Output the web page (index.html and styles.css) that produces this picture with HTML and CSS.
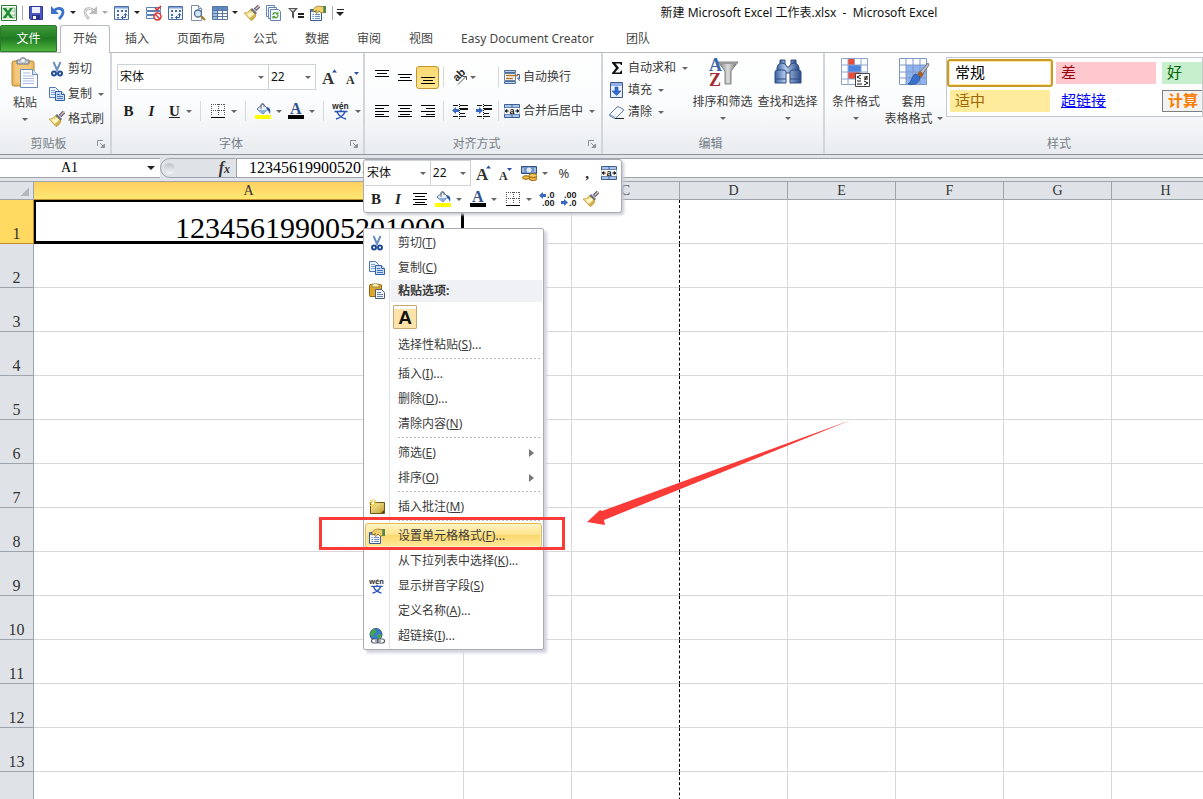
FILE: index.html
```html
<!DOCTYPE html>
<html lang="zh-CN">
<head>
<meta charset="utf-8">
<title>新建 Microsoft Excel 工作表.xlsx - Microsoft Excel</title>
<link rel="stylesheet" href="styles.css">
</head>
<body>
<svg class="sprite" aria-hidden="true">
  <defs>
    <linearGradient id="gTube" x1="0" y1="0" x2="1" y2="0"><stop offset="0" stop-color="#3b62a2"/><stop offset=".4" stop-color="#b9cdec"/><stop offset="1" stop-color="#274a86"/></linearGradient>
    <linearGradient id="gGold" x1="0" y1="0" x2="1" y2="1"><stop offset="0" stop-color="#fff3a8"/><stop offset="1" stop-color="#c09a2c"/></linearGradient>
    <linearGradient id="gGrey" x1="0" y1="0" x2="1" y2="0"><stop offset="0" stop-color="#777"/><stop offset=".5" stop-color="#ddd"/><stop offset="1" stop-color="#666"/></linearGradient>
  </defs>
  <symbol id="excel" viewBox="0 0 16 16"><path d="M.500.500h15v15H.500z" fill="#fff" stroke="#2c7a35"/><path d="M11 3h3v10h-3M11 6h3M11 10h3" fill="#fff" stroke="#7ab87d"/><path d="M1 2h10v12H1z" fill="#d5edcf"/><path d="M1.500 3h3.500L7 6l2-3h3L8.500 8l4 5H9L7 10l-2 3H1.500L5.500 8z" fill="#1d8a34"/></symbol>
  <symbol id="save" viewBox="0 0 16 16"><path d="M1.500 1.500h13v13h-12l-1-1z" fill="#4c57c6" stroke="#2f3796"/><path d="M4 2h8v6H4z" fill="#eef1fb"/><path d="M4 10h8v4H4z" fill="#2c3480"/><path d="M5 11h3v3H5z" fill="#fff"/></symbol>
  <symbol id="undo" viewBox="0 0 16 16"><path d="M1 1v8h8z" fill="#3b72cc"/><path d="M4 6c3-4 9-3 9 1 0 3-2 5-4 7" fill="none" stroke="#3b72cc" stroke-width="2.800"/></symbol>
  <symbol id="redo" viewBox="0 0 16 16"><path d="M15 1v8H7z" fill="#bbb"/><path d="M12 6C9 2 3 3 3 7c0 3 2 5 4 7" fill="none" stroke="#b5b5b5" stroke-width="2.600"/><path d="M12 6C9 2 3 3 3 7c0 3 2 5 4 7" fill="none" stroke="#eee"/></symbol>
  <symbol id="pivot" viewBox="0 0 16 16"><path d="M.500 1.500h14v13H.500z" fill="#f4f8fe" stroke="#4a6ea5"/><path d="M1 2h13v1.500H1z" fill="#7fa3d8"/><path d="M3 5h2v2H3zM7 5h2v2H7zM11 5h2v2h-2zM3 9h2v2H3zM3 12h2v1.500H3z" fill="#4a6ea5"/><path d="M7.500 12.500h4V9M10 10.500l1.500-2 1.500 2M9 11l-1.500 1.500L9 14" fill="none" stroke="#345a95"/></symbol>
  <symbol id="formno" viewBox="0 0 16 16"><path d="M.500 2.500h14v3h-14zM.500 6.500h14v3h-14zM.500 10.500h14v3h-14z" fill="#fff" stroke="#5c7fb5"/><path d="m9 3 2 2 4-4" stroke="#d22" stroke-width="1.500" fill="none"/><circle cx="11.500" cy="11.500" r="3.500" fill="#fff" stroke="#d33" stroke-width="1.500"/><path d="m9 9 5 5" stroke="#d33" stroke-width="1.500"/></symbol>
  <symbol id="preview" viewBox="0 0 16 16"><path d="M1.500.500h7l3 3v12h-10z" fill="#fff" stroke="#7d8ea8"/><path d="M8.500.500v3h3" fill="#dce6f4" stroke="#7d8ea8"/><circle cx="8" cy="8.500" r="3.500" fill="#cfe5f8" stroke="#4c6d93" stroke-width="1.300"/><path d="m11 11 4 4" stroke="#a9792c" stroke-width="2.200"/></symbol>
  <symbol id="table" viewBox="0 0 16 16"><path d="M.500 1.500h15v13H.500z" fill="#fff" stroke="#55779f"/><path d="M1 2h14v3H1z" fill="#5f8ac4"/><path d="M1 6h5v8H1z" fill="#9cbde8"/><path d="M1 5.500h14M1 8.500h14M1 11.500h14M5.500 2v12M10.500 2v12" stroke="#55779f"/></symbol>
  <symbol id="brush" viewBox="0 0 16 16"><path d="m15 1-4 4" stroke="#5a4f8c" stroke-width="3.500"/><path d="m15.500.500-4 4" stroke="#e0cf9a" stroke-width="1.200"/><path d="m8 3 5 5-2 2-5-5z" fill="#686f7a"/><path d="M6 4.500C5 7 3 8 0 8l7 7.500c3-1 4-3 5-5.500z" fill="url(#gGold)" stroke="#b38c25" stroke-width=".6"/><path d="M3 8.500c2 0 4-1 5-2l2 2c-1 2-3 4-5 4z" fill="#fff7c4"/></symbol>
  <symbol id="refresh" viewBox="0 0 16 16"><path d="M.500.500h8v11h-8z" fill="#fff" stroke="#6384b5"/><path d="M2.500 2.500h8v11h-8z" fill="#fff" stroke="#6384b5"/><path d="M4.500 4.500h8l2 2v9h-10z" fill="#f3f8ff" stroke="#6384b5"/><path d="M7 10c0-3 3-3 4-1m1 1c0 3-3 4-4 1" fill="none" stroke="#4b9a2c" stroke-width="1.300"/><path d="M12.500 6.500v3h-3zM6.500 14v-3h3z" fill="#4b9a2c"/></symbol>
  <symbol id="filter" viewBox="0 0 16 16"><path d="M0 3h10L6 7.500V14l-2-2V7.500z" fill="#555"/><path d="M2 4h5L5 6.500z" fill="#ddd"/><path d="M10 8h6v2h-6zM10 11h6v2h-6z" fill="#222"/></symbol>
  <symbol id="props" viewBox="0 0 16 16"><path d="M.500 4.500h11v11H.500z" fill="#f4f8ff" stroke="#3d5c94"/><path d="M1 5h10v2H1z" fill="#5d82bd"/><path d="M2.500 9.500h1.500M5 9.500h5M2.500 11.500h1.500M5 11.500h5M2.500 13.500h1.500M5 13.500h5" stroke="#6f8dbd"/><path d="M3 4.500C5 1.500 8 .500 11 1.500h3v6l-3 .500-2-2-2 2.500-1.500-1 1-2-3 1.500z" fill="#f0ce6a" stroke="#8a671c" stroke-width=".7"/><path d="M13.500 1H16v7h-2.500z" fill="#4b8a4c"/></symbol>
  <symbol id="clip" viewBox="0 0 28 32"><rect x="1" y="4" width="22" height="25" rx="2" fill="#edbb61" stroke="#b98430"/><path d="M4 6h16v20H4z" fill="#f3ca7d"/><path d="M6 3h3c0-3 6-3 6 0h3v4H6z" fill="#c8ccd2" stroke="#70767f"/><circle cx="12" cy="3.500" r="1.300" fill="#fff"/><path d="M9.500 12.500h12l5 5v13h-17z" fill="#fff" stroke="#6b8bb9"/><path d="M21.500 12.500v5h5" fill="#dbe7f7" stroke="#6b8bb9"/><path d="M12 16h7M12 19h11M12 21.500h11M12 24h11M12 26.500h11" stroke="#a6bbdb"/></symbol>
  <symbol id="cut" viewBox="0 0 16 16"><path d="m4.500 1 4 9M11.500 1l-4 9" stroke="#6c8fbd" stroke-width="2"/><circle cx="5" cy="12.500" r="2" fill="#fff" stroke="#234d99" stroke-width="2"/><circle cx="11" cy="12.500" r="2" fill="#fff" stroke="#234d99" stroke-width="2"/></symbol>
  <symbol id="copy" viewBox="0 0 16 16"><path d="M.500 1.500h6l3 3v7h-9z" fill="#e9f1fd" stroke="#4c76b8"/><path d="M2 4.500h4M2 6.500h4M2 8.500h4" stroke="#7d9fd2"/><path d="M6.500 5.500h6l3 3v6h-9z" fill="#c9dcf8" stroke="#2f5ea8"/><path d="M12.500 5.500v3h3" fill="#fff" stroke="#2f5ea8"/><path d="M8 8.500h3M8 10.500h6M8 12.500h6" stroke="#4674ba"/></symbol>
  <symbol id="paste" viewBox="0 0 16 16"><rect x=".5" y="1.500" width="12" height="12" rx="1" fill="#dfa82d" stroke="#8c6514"/><path d="M3 1h2c0-1.500 3-1.500 3 0h2v3H3z" fill="#f7ecae" stroke="#867131" stroke-width=".7"/><path d="M6.500 6.500h6l3 3v6h-9z" fill="#f2f6fc" stroke="#4b5e7d"/><path d="M8 9.500h4M8 11.500h6M8 13.500h6" stroke="#6882ab"/></symbol>
  <symbol id="grow" viewBox="0 0 16 16"><text x="0" y="15" font-family="Liberation Serif" font-size="17" font-weight="bold" fill="#333">A</text><path d="m10 3.500 2.500-3 2.500 3z" fill="#2b4fa0"/></symbol>
  <symbol id="shrink" viewBox="0 0 16 16"><text x="1" y="15" font-family="Liberation Serif" font-size="12" font-weight="bold" fill="#333">A</text><path d="M9 3h5l-2.500 3z" fill="#2b4fa0"/></symbol>
  <symbol id="border" viewBox="0 0 16 16"><path d="M1.500 1v12M8.500 1v12M14.500 1v12M1 1.500h14M1 7.500h14" stroke="#555" stroke-dasharray="1 1"/><path d="M1 14.500h14" stroke="#000"/></symbol>
  <symbol id="fill" viewBox="0 0 16 16"><path d="M2 6 8 1l5 5-5 5z" fill="#e9f1fc" stroke="#587098"/><path d="M3.500 7h9L8 11z" fill="#8daee0"/><path d="M6 6V2c0-2 3-2 3 0v2" fill="none" stroke="#666"/><path d="M11 4c4 0 5 3 4 7-1-2-1-3-3-4z" fill="#2d599f"/><path d="M0 12h16v4H0z" fill="#ff0"/></symbol>
  <symbol id="color" viewBox="0 0 16 16"><text x="2" y="11" font-family="Liberation Serif" font-size="16" font-weight="bold" fill="#31528f">A</text><path d="M0 12h16v4H0z" fill="#000"/></symbol>
  <symbol id="wen" viewBox="0 0 18 18"><text x="0" y="7" font-family="Noto Sans" font-size="8" font-weight="bold" fill="#333">wén</text><path d="M2.500 9.500h13M9 7.500v2M5 10c2 4 5 6 9 7M13 10c-2 4-5 6-9 7" fill="none" stroke="#2853b8" stroke-width="1.500"/></symbol>
  <symbol id="atop" viewBox="0 0 16 16"><path d="M1 1.500h14M3 4.500h10M1 7.500h14" stroke="#000"/></symbol>
  <symbol id="amid" viewBox="0 0 16 16"><path d="M1 5.500h14M3 8.500h10M1 11.500h14" stroke="#000"/></symbol>
  <symbol id="abot" viewBox="0 0 16 16"><path d="M1 8.500h14M3 11.500h10M1 14.500h14" stroke="#000"/></symbol>
  <symbol id="aleft" viewBox="0 0 16 16"><path d="M1 2.500h14M1 5.500h9M1 8.500h14M1 11.500h9M1 13.500h14" stroke="#000"/></symbol>
  <symbol id="acenter" viewBox="0 0 16 16"><path d="M1 2.500h14M3 5.500h10M1 8.500h14M3 11.500h10M1 13.500h14" stroke="#000"/></symbol>
  <symbol id="aright" viewBox="0 0 16 16"><path d="M1 2.500h14M6 5.500h9M1 8.500h14M6 11.500h9M1 13.500h14" stroke="#000"/></symbol>
  <symbol id="outdent" viewBox="0 0 16 16"><path d="M1 2.500h5M8 2.500h8M8 10.500h5M1 13.500h5M8 13.500h6" stroke="#111"/><path d="M8 6h8" stroke="#111" stroke-width="2"/><path d="M7.500 1v15" stroke="#111" stroke-dasharray="1 1"/><path d="M0 7.500 4 4v2h3v3H4v2z" fill="#3769c4"/></symbol>
  <symbol id="indent" viewBox="0 0 16 16"><path d="M1 2.500h5M8 2.500h8M8 10.500h5M1 13.500h5M8 13.500h6" stroke="#111"/><path d="M8 6h8" stroke="#111" stroke-width="2"/><path d="M7.500 1v15" stroke="#111" stroke-dasharray="1 1"/><path d="M7 7.500 3 4v2H0v3h3v2z" fill="#3769c4"/></symbol>
  <symbol id="orient" viewBox="0 0 16 16"><text x="0" y="0" transform="translate(5 13) rotate(-45)" font-family="Liberation Sans" font-size="11" font-weight="bold" fill="#222">ab</text><path d="m6 15.500 8-8M14.500 11V7.500H11" fill="none" stroke="#555"/></symbol>
  <symbol id="wrap" viewBox="0 0 16 16"><path d="M.500 1.500h11v2H.500zM.500 12.500h11v2H.500z" fill="#b8cfee" stroke="#4c6c9c"/><path d="M.500 4.500h11v7H.500z" fill="#fff" stroke="#68829f"/><path d="M2 6.500h12M2 9.500h7" stroke="#b4762d" stroke-width="1.300"/><path d="M13 5.500h2.500V10M13.500 9h4l-2 2.500z" fill="none" stroke="#44669a"/></symbol>
  <symbol id="merge" viewBox="0 0 16 16"><path d="M.500 1.500h15v13H.500z" fill="#a9c3ea" stroke="#3c5f93"/><path d="M8 2v3M8 11v3" stroke="#3c5f93"/><path d="M0 4.500h16v7H0z" fill="#fff" stroke="#3c5f93" stroke-width=".7"/><path d="M1 8h4M11 8h4M1 8l2-1.500v3zM15 8l-2-1.500v3z" stroke="#222" stroke-width=".8"/><text x="5.500" y="10.500" font-family="Liberation Sans" font-size="9" font-weight="bold" fill="#111">a</text></symbol>
  <symbol id="sigma" viewBox="0 0 16 16"><path d="M3 2h10v3h-1l-1-1.500H6.500L10 8l-4 4.500h5l1-2h1V14H3v-1l4-5-4-5z" fill="#111"/></symbol>
  <symbol id="down" viewBox="0 0 16 16"><path d="M1.500.500h12v15h-12z" fill="#e7effc" stroke="#41598a"/><path d="M2 1h11v3H2z" fill="#8fb1e4"/><path d="M6 5h3v4h3l-4.500 4.500L3 9h3z" fill="#2f6bd2" stroke="#2450a3" stroke-width=".6"/></symbol>
  <symbol id="erase" viewBox="0 0 16 16"><path d="m1 10 7-7q1-1 2 0l4 2q1 1 0 2l-7 7q-1 1-2 0l-4-2q-1-1 0-2z" fill="#f5f8fd" stroke="#637aa3"/><path d="m1 10 5 3v2l-5-3z" fill="#8aa4d0"/><path d="M6 14.500h9" stroke="#222"/></symbol>
  <symbol id="sort" viewBox="0 0 32 30"><path d="M11 5h20L24 14v13h-6V14z" fill="url(#gGrey)" stroke="#666" stroke-width=".8"/><path d="M12 5h18v2H12z" fill="#999"/><text x="2" y="14" font-family="Liberation Serif" font-size="18" font-weight="bold" fill="#3a66ad">A</text><text x="2" y="29" font-family="Liberation Serif" font-size="18" font-weight="bold" fill="#a32a31">Z</text></symbol>
  <symbol id="find" viewBox="0 0 32 30"><path d="M8 3h5v6H8zM19 3h5v6h-5z" fill="url(#gTube)" stroke="#2d4d83"/><path d="M5 11q1-5 5-5t5 4h2q1-4 5-4t5 5v5H5z" fill="url(#gTube)" stroke="#2d4d83"/><path d="M3 15q0-2 3-2h5q3 0 3 2v11H3zM18 15q0-2 3-2h5q3 0 3 2v11H18z" fill="url(#gTube)" stroke="#2d4d83"/><path d="M3 22h11M18 22h11" stroke="#2d4d83"/></symbol>
  <symbol id="cond" viewBox="0 0 32 30"><path d="M1 1h27v27H1z" fill="#fff"/><path d="M8 1h7v7H8zM8 15h12v7H8z" fill="#ec4b39"/><path d="M8 8h13v7H8z" fill="#4d84de"/><path d="M1.500 1.500h26v26h-26zM1 8h27M1 15h27M1 22h27M8 1v27M14.500 1v7M21 1v27" fill="none" stroke="#8ca4cf"/><path d="M15.500 16.500h14v13h-14z" fill="#fff" stroke="#444"/><path d="m21 18-4 2 4 2m-4 2h4m-4 3h5M24 20h4m-4 2h4m-1-3-2 4m-1 1 4 2-4 2" fill="none" stroke="#111"/></symbol>
  <symbol id="tstyle" viewBox="0 0 32 30"><path d="M1 1h28v27H1z" fill="#fff"/><path d="M8 8h21v20H8z" fill="#8fb2f0"/><path d="M1.500 1.500h27v26h-27zM1 8h28M1 15h28M1 21h28M8 1v27M15 1v27M22 1v27" fill="none" stroke="#7f97c4"/><path d="m31 8-7 10-3-2 9-10z" fill="#b9bec6" stroke="#666" stroke-width=".8"/><path d="m22 14 4 3-3 4-4-4z" fill="#a5612d"/><path d="M18 17c-4 0-4 8-8 10 6 2 12-1 12-7z" fill="#3a72c9" stroke="#234c93" stroke-width=".7"/></symbol>
  <symbol id="launch" viewBox="0 0 8 8"><path d="M.500 6V.500H6" fill="none" stroke="#8b9199"/><path d="m3 3 4 4M7.500 4v3.500H4z" stroke="#8b9199" fill="#8b9199"/></symbol>
  <symbol id="money" viewBox="0 0 16 16"><path d="M.500 1.500h15v7H.500z" fill="#6f94c8" stroke="#2f4f87"/><circle cx="8" cy="5" r="2.500" fill="#dfe9f8"/><path d="M2 3v4M14 3v4" stroke="#dfe9f8"/><ellipse cx="12" cy="13.500" rx="4" ry="2" fill="#f0b93a" stroke="#98661c"/><ellipse cx="12" cy="10.500" rx="4" ry="2" fill="#f7cc56" stroke="#98661c"/><ellipse cx="5" cy="12.500" rx="3.500" ry="1.800" fill="#f0b93a" stroke="#98661c"/></symbol>
  <symbol id="decinc" viewBox="0 0 16 16"><path d="M0 4.500 4 1v2h3v3H4v2z" fill="#3769c4"/><text x="8" y="7" font-family="Liberation Sans" font-size="9" font-weight="bold" fill="#222">.0</text><text x="3" y="15" font-family="Liberation Sans" font-size="9" font-weight="bold" fill="#222">.00</text></symbol>
  <symbol id="decdec" viewBox="0 0 16 16"><text x="3" y="7" font-family="Liberation Sans" font-size="9" font-weight="bold" fill="#222">.00</text><path d="M7 11.500 3 8v2H0v3h3v2z" fill="#3769c4"/><text x="8" y="15" font-family="Liberation Sans" font-size="9" font-weight="bold" fill="#222">.0</text></symbol>
  <symbol id="note" viewBox="0 0 16 16"><path d="M1.500 3.500h14v11h-14z" fill="url(#gGold)" stroke="#6d5716"/><path d="m12 14 3-3v3z" fill="#584613"/><path d="M4 0v8M0 4h8M1 1l6 6M7 1 1 7" stroke="#eeb823"/><circle cx="4" cy="4" r="1.500" fill="#fffbd0"/></symbol>
  <symbol id="globe" viewBox="0 0 16 16"><circle cx="7" cy="6.500" r="6" fill="#3a7cc9" stroke="#305584"/><path d="M3 2c3-2 5 0 4 2S4 6 4 8 1 7 1 6zM8 7c3-2 5-1 4 2s-3 3-3 1z" fill="#48a548"/><rect x="2.500" y="11" width="7" height="4" rx="2" fill="#fff" stroke="#505968" stroke-width="1.200"/><rect x="8.500" y="11" width="7" height="4" rx="2" fill="#fff" stroke="#505968" stroke-width="1.200"/><path d="M6 13h6" stroke="#505968"/></symbol>
</svg>

<header class="titlebar">
  <div class="quick">
    <svg class="ic"><use href="#excel"/></svg>
    <span class="vline"></span>
    <button aria-label="保存"><svg class="ic"><use href="#save"/></svg></button>
    <button class="wide" aria-label="撤消"><svg class="ic"><use href="#undo"/></svg><i class="caret dark"></i></button>
    <button class="wide" aria-label="恢复"><svg class="ic"><use href="#redo"/></svg><i class="caret pale"></i></button>
    <button class="wide" aria-label="数据透视表"><svg class="ic"><use href="#pivot"/></svg><i class="caret dark"></i></button>
    <button aria-label="数据有效性"><svg class="ic"><use href="#formno"/></svg></button>
    <button aria-label="透视图"><svg class="ic"><use href="#pivot"/></svg></button>
    <button aria-label="打印预览"><svg class="ic"><use href="#preview"/></svg></button>
    <button class="wide" aria-label="表格"><svg class="ic"><use href="#table"/></svg><i class="caret dark"></i></button>
    <button aria-label="格式刷"><svg class="ic"><use href="#brush"/></svg></button>
    <button aria-label="刷新"><svg class="ic"><use href="#refresh"/></svg></button>
    <button aria-label="筛选"><svg class="ic"><use href="#filter"/></svg></button>
    <button aria-label="属性"><svg class="ic"><use href="#props"/></svg></button>
    <span class="vline end"></span>
    <button class="custom" aria-label="自定义"><i class="caret dark"></i></button>
  </div>
  <div class="title">新建 Microsoft Excel 工作表.xlsx &nbsp;- &nbsp;Microsoft Excel</div>
</header>

<nav class="tabs">
  <button class="file">文件</button>
  <button class="tab active">开始</button>
  <button class="tab">插入</button>
  <button class="tab">页面布局</button>
  <button class="tab">公式</button>
  <button class="tab">数据</button>
  <button class="tab">审阅</button>
  <button class="tab">视图</button>
  <button class="tab addin">Easy Document Creator</button>
  <button class="tab">团队</button>
</nav>

<section class="ribbon">
  <div class="group clipboard">
    <div class="body">
      <button class="big"><svg class="clipicon"><use href="#clip"/></svg><span>粘贴</span><i class="caret"></i></button>
      <div class="stack loose">
        <button class="cmd"><svg class="ic"><use href="#cut"/></svg>剪切</button>
        <button class="cmd"><svg class="ic"><use href="#copy"/></svg>复制<i class="caret"></i></button>
        <button class="cmd"><svg class="ic"><use href="#brush"/></svg>格式刷</button>
      </div>
    </div>
    <footer><span>剪贴板</span><svg class="launch"><use href="#launch"/></svg></footer>
  </div>

  <div class="group font">
    <div class="body rows">
      <div class="row">
        <div class="combo name"><input aria-label="字体" value="宋体"><i class="caret"></i></div>
        <div class="combo size"><input aria-label="字号" value="22"><i class="caret"></i></div>
        <button class="tool grow" aria-label="增大字号"><svg class="ic"><use href="#grow"/></svg></button>
        <button class="tool" aria-label="减小字号"><svg class="ic"><use href="#shrink"/></svg></button>
      </div>
      <div class="row">
        <button class="tool letter bold">B</button>
        <button class="tool letter italic">I</button>
        <button class="tool letter under">U</button><i class="caret"></i>
        <span class="vline push"></span>
        <button class="tool split" aria-label="边框"><svg class="ic"><use href="#border"/></svg><i class="caret"></i></button>
        <span class="vline"></span>
        <button class="tool split" aria-label="填充颜色"><svg class="ic"><use href="#fill"/></svg><i class="caret"></i></button>
        <button class="tool split" aria-label="字体颜色"><svg class="ic"><use href="#color"/></svg><i class="caret"></i></button>
        <span class="vline"></span>
        <button class="tool split" aria-label="拼音"><svg class="ic wen"><use href="#wen"/></svg><i class="caret"></i></button>
      </div>
    </div>
    <footer><span>字体</span><svg class="launch"><use href="#launch"/></svg></footer>
  </div>

  <div class="group align">
    <div class="body rows">
      <div class="row">
        <button class="tool" aria-label="顶端对齐"><svg class="ic"><use href="#atop"/></svg></button>
        <button class="tool" aria-label="垂直居中"><svg class="ic"><use href="#amid"/></svg></button>
        <button class="tool on" aria-label="底端对齐"><svg class="ic"><use href="#abot"/></svg></button>
        <span class="vline"></span>
        <button class="tool pair" aria-label="方向"><svg class="ic"><use href="#orient"/></svg><i class="caret"></i></button>
        <span class="vline"></span>
        <button class="cmd"><svg class="ic"><use href="#wrap"/></svg>自动换行</button>
      </div>
      <div class="row">
        <button class="tool" aria-label="左对齐"><svg class="ic"><use href="#aleft"/></svg></button>
        <button class="tool" aria-label="居中"><svg class="ic"><use href="#acenter"/></svg></button>
        <button class="tool" aria-label="右对齐"><svg class="ic"><use href="#aright"/></svg></button>
        <span class="vline"></span>
        <span class="pair"><button class="tool" aria-label="减少缩进"><svg class="ic"><use href="#outdent"/></svg></button><button class="tool" aria-label="增加缩进"><svg class="ic"><use href="#indent"/></svg></button></span>
        <span class="vline"></span>
        <button class="cmd"><svg class="ic"><use href="#merge"/></svg>合并后居中<i class="caret"></i></button>
      </div>
    </div>
    <footer><span>对齐方式</span><svg class="launch"><use href="#launch"/></svg></footer>
  </div>

  <div class="group edit">
    <div class="body">
      <div class="stack">
        <button class="cmd"><svg class="ic"><use href="#sigma"/></svg>自动求和<i class="caret"></i></button>
        <button class="cmd"><svg class="ic"><use href="#down"/></svg>填充<i class="caret"></i></button>
        <button class="cmd"><svg class="ic"><use href="#erase"/></svg>清除<i class="caret"></i></button>
      </div>
      <button class="big"><svg class="bigicon"><use href="#sort"/></svg><span>排序和筛选</span><i class="caret"></i></button>
      <button class="big"><svg class="bigicon"><use href="#find"/></svg><span>查找和选择</span><i class="caret"></i></button>
    </div>
    <footer><span>编辑</span></footer>
  </div>

  <div class="group styles">
    <div class="body">
      <button class="big"><svg class="bigicon"><use href="#cond"/></svg><span>条件格式</span><i class="caret"></i></button>
      <button class="big astable"><svg class="bigicon"><use href="#tstyle"/></svg><span>套用</span><span class="inline">表格格式<i class="caret"></i></span></button>
      <div class="gallery">
        <button class="swatch normal">常规</button>
        <button class="swatch bad">差</button>
        <button class="swatch good">好</button>
        <button class="swatch neutral">适中</button>
        <button class="swatch link">超链接</button>
        <button class="swatch calc">计算</button>
      </div>
    </div>
    <footer><span>样式</span></footer>
  </div>
</section>

<div class="formula">
  <div class="namebox"><input aria-label="名称框" value="A1"><i class="caret dark"></i></div>
  <div class="fx"><span class="knob"></span><em>f<small>x</small></em></div>
  <input class="value" aria-label="编辑栏" value="123456199005201000">
</div>

<main class="sheet">
  <table class="grid">
    <colgroup><col class="c0"><col class="c1"><col span="7" class="cn"></colgroup>
    <thead><tr><th class="corner"></th><th class="sel">A</th><th>B</th><th>C</th><th>D</th><th>E</th><th>F</th><th>G</th><th>H</th></tr></thead>
    <tbody>
      <tr><th class="sel">1</th><td class="active">123456199005201000</td><td></td><td class="brk"></td><td></td><td></td><td></td><td></td><td></td></tr>
      <tr><th>2</th><td></td><td></td><td class="brk"></td><td></td><td></td><td></td><td></td><td></td></tr>
      <tr><th>3</th><td></td><td></td><td class="brk"></td><td></td><td></td><td></td><td></td><td></td></tr>
      <tr><th>4</th><td></td><td></td><td class="brk"></td><td></td><td></td><td></td><td></td><td></td></tr>
      <tr><th>5</th><td></td><td></td><td class="brk"></td><td></td><td></td><td></td><td></td><td></td></tr>
      <tr><th>6</th><td></td><td></td><td class="brk"></td><td></td><td></td><td></td><td></td><td></td></tr>
      <tr><th>7</th><td></td><td></td><td class="brk"></td><td></td><td></td><td></td><td></td><td></td></tr>
      <tr><th>8</th><td></td><td></td><td class="brk"></td><td></td><td></td><td></td><td></td><td></td></tr>
      <tr><th>9</th><td></td><td></td><td class="brk"></td><td></td><td></td><td></td><td></td><td></td></tr>
      <tr><th>10</th><td></td><td></td><td class="brk"></td><td></td><td></td><td></td><td></td><td></td></tr>
      <tr><th>11</th><td></td><td></td><td class="brk"></td><td></td><td></td><td></td><td></td><td></td></tr>
      <tr><th>12</th><td></td><td></td><td class="brk"></td><td></td><td></td><td></td><td></td><td></td></tr>
      <tr><th>13</th><td></td><td></td><td class="brk"></td><td></td><td></td><td></td><td></td><td></td></tr>
      <tr><th></th><td></td><td></td><td class="brk"></td><td></td><td></td><td></td><td></td><td></td></tr>
    </tbody>
  </table>
</main>

<div class="mini">
  <div class="row">
    <div class="combo name"><input aria-label="字体" value="宋体"><i class="caret"></i></div>
    <div class="combo size"><input aria-label="字号" value="22"><i class="caret"></i></div>
    <button class="tool grow" aria-label="增大字号"><svg class="ic"><use href="#grow"/></svg></button>
    <button class="tool" aria-label="减小字号"><svg class="ic"><use href="#shrink"/></svg></button>
    <button class="tool split" aria-label="会计数字格式"><svg class="ic"><use href="#money"/></svg><i class="caret"></i></button>
    <button class="tool percent">%</button>
    <button class="tool letter">,</button>
    <button class="tool" aria-label="合并后居中"><svg class="ic"><use href="#merge"/></svg></button>
  </div>
  <div class="row">
    <button class="tool letter bold">B</button>
    <button class="tool letter italic">I</button>
    <button class="tool" aria-label="居中"><svg class="ic"><use href="#acenter"/></svg></button>
    <button class="tool split" aria-label="填充颜色"><svg class="ic"><use href="#fill"/></svg><i class="caret"></i></button>
    <button class="tool split" aria-label="字体颜色"><svg class="ic"><use href="#color"/></svg><i class="caret"></i></button>
    <button class="tool split" aria-label="边框"><svg class="ic"><use href="#border"/></svg><i class="caret"></i></button>
    <button class="tool" aria-label="增加小数位数"><svg class="ic"><use href="#decinc"/></svg></button>
    <button class="tool" aria-label="减少小数位数"><svg class="ic"><use href="#decdec"/></svg></button>
    <button class="tool" aria-label="格式刷"><svg class="ic"><use href="#brush"/></svg></button>
  </div>
</div>

<div class="menu">
  <button class="item"><svg class="ic"><use href="#cut"/></svg><span>剪切(<u>T</u>)</span></button>
  <button class="item"><svg class="ic"><use href="#copy"/></svg><span>复制(<u>C</u>)</span></button>
  <div class="item heading"><svg class="ic"><use href="#paste"/></svg><span>粘贴选项:</span></div>
  <div class="options"><button class="keep">A</button></div>
  <button class="item"><span>选择性粘贴(<u>S</u>)...</span></button>
  <hr>
  <button class="item"><span>插入(<u>I</u>)...</span></button>
  <button class="item"><span>删除(<u>D</u>)...</span></button>
  <button class="item"><span>清除内容(<u>N</u>)</span></button>
  <hr>
  <button class="item"><span>筛选(<u>E</u>)</span><i class="sub"></i></button>
  <button class="item"><span>排序(<u>O</u>)</span><i class="sub"></i></button>
  <hr>
  <button class="item"><svg class="ic"><use href="#note"/></svg><span>插入批注(<u>M</u>)</span></button>
  <hr>
  <button class="item hot"><svg class="ic"><use href="#props"/></svg><span>设置单元格格式(<u>F</u>)...</span></button>
  <button class="item"><span>从下拉列表中选择(<u>K</u>)...</span></button>
  <button class="item"><svg class="ic"><use href="#wen"/></svg><span>显示拼音字段(<u>S</u>)</span></button>
  <button class="item"><span>定义名称(<u>A</u>)...</span></button>
  <button class="item"><svg class="ic"><use href="#globe"/></svg><span>超链接(<u>I</u>)...</span></button>
</div>

<div class="frame"></div>
<svg class="arrow" viewBox="0 0 264 106"><path d="M264 0 15 91 13 90 0 102 18 105 17 100z" fill="#fb3b38"/></svg>
</body>
</html>
```
FILE: styles.css
```css
* { box-sizing: border-box; }
html, body { height: 100%; }
body {
  margin: 0;
  position: relative;
  display: flex;
  flex-direction: column;
  overflow: hidden;
  background: #fff;
  color: #3b3b3b;
  font: 12px/16px "Noto Sans", "Noto Sans CJK SC", sans-serif;
}
button, input { font: inherit; color: inherit; border: 0; padding: 0; margin: 0; background: none; min-width: 0; }
button { display: flex; align-items: center; justify-content: center; white-space: nowrap; }
.sprite { position: absolute; width: 0; height: 0; visibility: hidden; }
.ic { width: 16px; height: 16px; flex: none; overflow: visible; }
.caret { flex: none; width: 0; height: 0; border: 3px solid transparent; border-top-color: #666; border-bottom-width: 0; }
.caret.dark { border-top-color: #222; }
.caret.pale { border-top-color: #aaa; }
.vline { flex: none; width: 1px; height: 20px; background: #d4d7db; }

/* title bar */
.titlebar { display: flex; flex: none; height: 25px; align-items: center; }
.quick { display: flex; align-items: center; height: 22px; padding-left: 1px; }
.quick .vline { height: 14px; margin: 0 2px 0 5px; background: #aaa; }
.quick .vline.end { margin: 0 0 0 3px; }
.quick button { width: 22px; height: 22px; }
.quick .wide { width: 32px; gap: 4px; }
.quick .custom { width: 14px; flex-direction: column; gap: 2px; }
.quick .custom .caret { border-width: 4px 4px 0; }
.quick .custom::before { content: ""; width: 7px; height: 1px; background: #222; }
.title { flex: 1; text-align: center; color: #111; padding-left: 48px; }

/* tabs */
.tabs { display: flex; flex: none; height: 28px; border-bottom: 1px solid #b6babf; }
.file { width: 57px; height: 27px; margin-right: 3px; border: 1px solid #2b7a28; border-radius: 2px 2px 0 0; color: #fff; background: linear-gradient(#3f9a3a, #1f7a22 50%, #4fb53c); }
.tab { height: 28px; padding: 0 12px 1px; margin: 0 -1px 0 5px; color: #444; }
.tab.active { width: 50px; padding: 0 0 2px; margin: 0 1px 0 0; border: 1px solid #b6babf; border-bottom: 0; border-radius: 3px 3px 0 0; background: #fff; }
.tab.active + .tab { margin-left: 2px; }
.tab.addin { padding-right: 16px; }

/* ribbon */
.ribbon { display: flex; flex: none; height: 102px; background: linear-gradient(#fff, #fbfcfd 50%, #e8ebef); border-bottom: 1px solid #8f959b; }
.group { display: flex; flex-direction: column; flex: none; border-right: 2px solid #d2d5d9; }
.group .body { flex: 1; display: flex; align-items: flex-start; padding-top: 4px; }
.group footer { display: flex; align-items: center; height: 20px; padding-right: 5px; color: #767d86; }
.group footer span { flex: 1; text-align: center; }
.launch { width: 8px; height: 8px; }
.clipboard { width: 112px; }
.font { width: 253px; }
.align { width: 238px; }
.edit { width: 222px; }
.group.styles { flex: 1; border: 0; min-width: 0; }
.group.styles footer { padding-left: 90px; padding-right: 0; }
.cmd { gap: 3px; height: 22px; }
.cmd .caret { margin-left: 3px; }
.stack { display: flex; flex-direction: column; align-items: flex-start; }
.stack.loose { gap: 3px; }
.big { flex: none; flex-direction: column; line-height: 17px; }
.big .caret { margin-top: 7px; }
.clipicon { width: 28px; height: 32px; margin-bottom: 5px; }
.bigicon { width: 32px; height: 30px; margin-bottom: 6px; }
.clipboard .body { padding-left: 11px; gap: 10px; }
.clipboard .body .stack { padding-top: 1px; }

.body.rows { flex-direction: column; gap: 10px; padding-top: 12px; }
.row { display: flex; align-items: center; height: 24px; }
.tool { width: 23px; height: 23px; flex: none; }
.tool.split { width: 33px; gap: 5px; }
.combo { display: flex; align-items: center; height: 26px; border: 1px solid #cfd3d8; background: #fff; padding: 0 4px 0 2px; color: #111; }
.combo input { flex: 1; width: 20px; }
.font .rows { padding-left: 5px; }
.font .name { width: 152px; }
.font .size { width: 48px; margin-left: -1px; }
.grow { margin-left: 2px; }
.letter { font-family: "Liberation Serif", serif; font-size: 15px; font-weight: bold; color: #222; }
.italic { font-style: italic; }
.under { text-decoration: underline; }
.push { margin-left: 8px; }
.font .vline { margin-right: 6px; }
.font .split + .vline { margin-left: 5px; }
.wen { width: 18px; height: 18px; }
.align .rows { padding-left: 5px; }
.align .vline { margin: 0 5px 0 4px; }
.pair { display: flex; width: 45px; gap: 2px; justify-content: flex-start; }
.tool.pair { padding-left: 3px; width: 45px; }
.pair .tool { width: 22px; }
.on { border: 1px solid #c2962e; border-radius: 3px; background: linear-gradient(#fbd873, #ffe68e); }
.edit .body { padding-left: 6px; }
.edit .stack { width: 81px; }
.edit .big { width: 65px; }
.styles .body { padding-left: 1px; }
.styles .big { width: 60px; }
.styles .astable { padding-right: 5px; }
.inline { display: flex; align-items: center; gap: 4px; }
.inline .caret { margin-top: 0; }
.gallery { flex: 1; display: grid; grid-template-columns: repeat(3, 106px); grid-auto-rows: 28px; align-items: center; overflow: hidden; border: 1px solid #c5c9ce; background: #fff; height: 60px; padding: 1px 0; }
.swatch { justify-content: flex-start; height: 22px; margin: 0 3px; padding-left: 5px; font-size: 15px; font-family: "Liberation Serif", "Noto Sans CJK SC", serif; color: #000; }
.swatch.normal { height: 28px; margin: 0; padding-left: 6px; border: 2px solid #c99a2e; border-radius: 3px; box-shadow: inset 0 0 0 1px #ffe69a; }
.swatch.bad { background: #ffc7ce; color: #9c0006; }
.swatch.good { background: #c6efce; color: #006100; }
.swatch.neutral { background: #ffeb9c; color: #9c6500; }
.swatch.link { color: #00f; text-decoration: underline; }
.swatch.calc { background: #f2f2f2; border: 1px solid #7f7f7f; color: #fa7d00; font-weight: bold; }

/* formula bar */
.formula { display: flex; flex: none; height: 26px; padding: 3px 0 3px; background: #e1e4e9; font: 16px/18px "Liberation Serif", serif; color: #000; }
.namebox, .fx, .formula .value { border-top: 1px solid #9ea4ab; border-bottom: 1px solid #9ea4ab; height: 20px; }
.namebox { display: flex; align-items: center; width: 160px; background: #fff; padding-right: 5px; font-size: 14px; }
.namebox input { flex: 1; text-align: center; width: 60px; padding-right: 8px; }
.namebox .caret { border-width: 4px 4px 0; }
.fx { display: flex; align-items: center; justify-content: space-between; width: 77px; padding: 0 6px 0 3px; border-left: 1px solid #9ea4ab; border-right: 1px solid #9ea4ab; border-radius: 10px 0 0 10px; background: #dfe2e7; color: #333; font-weight: bold; }
.fx small { font-size: 12px; }
.knob { width: 11px; height: 11px; border-radius: 50%; background: linear-gradient(#bfc4ca, #f4f5f7); }
.formula .value { flex: 1; padding-left: 12px; background: #fff; }

/* sheet */
.sheet { flex: 1; overflow: hidden; min-height: 0; }
.grid { table-layout: fixed; border-collapse: separate; border-spacing: 0; width: 1220px; font: 16px/18px "Liberation Serif", serif; color: #333; }
.c0 { width: 34px; }
.c1 { width: 430px; }
.cn { width: 108px; }
.grid th { padding: 0; font-weight: normal; background: #dfe3e8; border-right: 1px solid #9ea4ab; border-bottom: 1px solid #9ea4ab; }
.grid thead th { height: 19px; font-size: 14px; line-height: 16px; border-top: 1px solid #9ea4ab; }
.grid tbody th { height: 44px; vertical-align: bottom; }
.grid td { padding: 0; border-right: 1px solid #d8d8d8; border-bottom: 1px solid #d8d8d8; }
.grid thead .sel { background: linear-gradient(#ffd060, #ffe874); border-bottom-color: #c48a30; }
.grid tbody .sel { background: #ffd960; border-color: #c48a30; }
.grid .corner { background: linear-gradient(135deg, transparent 50%, #b3b8be 50%) right 4px bottom 3px / 9px 9px no-repeat #dfe3e8; }
.grid .brk { border-right: 1px dashed #000; }
.grid .active { border: 2px solid #000; border-width: 2px 3px 3px 2px; text-align: right; vertical-align: bottom; padding-right: 16px; font-size: 30px; line-height: 26px; color: #000; }

/* floating toolbar */
.mini { position: absolute; left: 363px; top: 159px; width: 259px; height: 54px; border: 1px solid #a9adb3; border-radius: 3px; background: #fff; box-shadow: 2px 2px 3px #c9c9d4; padding: 0 1px; }
.mini .row { height: 26px; }
.mini .name { width: 69px; border-left: 0; }
.mini .size { width: 43px; margin-left: -1px; }
.mini .tool { width: 22px; }
.mini .split { width: 35px; }
.mini .percent { font-size: 13px; width: 24px; }

/* context menu */
.menu { position: absolute; left: 363px; top: 228px; width: 181px; padding: 1px 1px; border: 1px solid #a9adb3; border-radius: 2px; background: linear-gradient(90deg, transparent 25px, #dfe1e5 25px, #dfe1e5 26px, transparent 26px) #fff; box-shadow: 3px 3px 3px #d3d3e0; }
.item { position: relative; display: flex; align-items: center; justify-content: flex-start; width: 100%; height: 25px; padding-left: 4px; }
.item span { flex: 1; text-align: left; padding-left: 13px; }
.item span:first-child { padding-left: 29px; }
.item.heading { height: 22px; font-weight: bold; background: linear-gradient(90deg, transparent 26px, #f0f1f5 26px); }
.item .wen { width: 16px; }
.options { display: flex; align-items: center; height: 30px; padding-left: 28px; }
.keep { width: 24px; height: 24px; border: 1px solid #c9a86c; border-radius: 1px; background: linear-gradient(#fff 3px, #fde3aa 3px); font: bold 19px/22px "Liberation Sans", sans-serif; color: #111; padding-top: 2px; }
.menu hr { height: 4px; margin: 0 0 0 33px; border: 0; background: repeating-linear-gradient(90deg, #bbb 0 2px, transparent 2px 4px) 0 1px / 100% 1px no-repeat; }
.sub { margin-right: 8px; border: 4px solid transparent; border-left: 5px solid #777; border-right: 0; }
.hot { border: 1px solid #e5b84e; border-radius: 3px; padding-left: 3px; background: linear-gradient(#fff3c4, #ffe48b 45%, #fbd86f 50%, #ffe99a); box-shadow: inset 0 0 0 1px #fff3c9; }

/* annotation */
.frame { position: absolute; left: 319px; top: 517px; width: 246px; height: 33px; border: 3px solid #fb3b38; }
.arrow { position: absolute; left: 587px; top: 420px; width: 264px; height: 106px; }
```
